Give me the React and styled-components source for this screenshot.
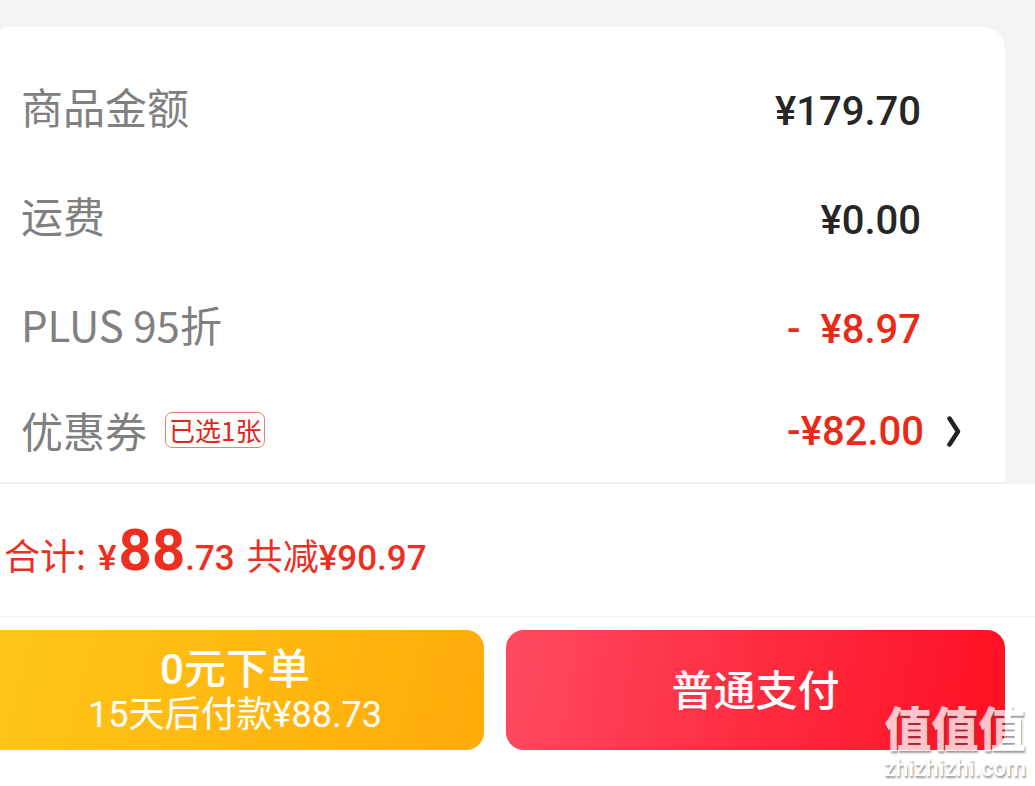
import React, { Component } from 'react';
import styled, { createGlobalStyle } from 'styled-components';

const GlobalStyle = createGlobalStyle`
  * {
    box-sizing: border-box;
  }

  body {
    margin: 0;
    background-color: white;
    font-family: 'Noto Sans CJK SC', 'Noto Sans', sans-serif;
  }

  button {
    border: none;
    padding: 0;
    background: none;
    font-family: Roboto, 'Noto Sans CJK SC', sans-serif;
    cursor: pointer;
  }
`;

const Page = styled.main`
  display: flex;
  flex-direction: column;
  min-height: 100vh;
`;

const Summary = styled.section`
  padding: 27px 30px 0 0;
  background-color: #f4f4f4;
`;

const Card = styled.dl`
  margin: 0;
  padding: 27px 84px 0 21px;
  background-color: white;
  border-radius: 6px 22px 0 0;
`;

const Row = styled.div`
  display: flex;
  align-items: center;
  justify-content: space-between;
  height: ${props => (props.$last ? 101 : 109)}px;
`;

const Label = styled.dt`
  display: flex;
  align-items: center;
  gap: 18px;
  padding-bottom: ${props => (props.$raised ? 6 : 3)}px;
  color: #808080;
  font-size: 42px;
  line-height: 60px;
`;

const Tag = styled.span`
  padding: 0 3px;
  border: 1px solid #e8826f;
  border-radius: 7px;
  color: #e1251b;
  font-size: 26px;
  line-height: 34px;
`;

const Amount = styled.dd`
  display: flex;
  align-items: center;
  margin: 0;
  padding-top: ${props => (props.$lowered ? 6 : 0)}px;
  color: ${props => (props.$discount ? '#e92a17' : '#262626')};
  font-family: Roboto, sans-serif;
  font-size: 40px;
  font-weight: 500;
  line-height: 48px;
  white-space: pre;
`;

const MoreButton = styled.button`
  display: flex;
  margin-right: -41px;
  padding-left: 22px;
`;

const Total = styled.section`
  display: flex;
  align-items: baseline;
  height: 135px;
  padding: 26px 4px 0;
  border-top: 2px solid #f2f2f2;
  border-bottom: 1px solid #f4f4f4;
  color: #ee2f1f;
  font-size: 36px;
  line-height: 80px;
`;

const Price = styled.span`
  margin: ${props => (props.$spaced ? '0 12px' : '0')};
  font-family: Roboto, sans-serif;
  font-size: 35px;
  font-weight: 500;
`;

const Big = styled.strong`
  margin-left: 2px;
  font-size: 58px;
  font-weight: 700;
`;

const Actions = styled.footer`
  position: relative;
  display: flex;
  flex-grow: 1;
  align-items: flex-start;
  gap: 22px;
  padding: 13px 30px 36px 0;
`;

const PayButton = styled.button`
  display: flex;
  flex-direction: column;
  align-items: center;
  justify-content: center;
  height: 120px;
  padding-top: 4px;
  color: white;
  font-size: 42px;
  font-weight: 500;
  line-height: 46px;
`;

const LaterButton = styled(PayButton)`
  flex: 470 1 0;
  padding-right: 14px;
  border-radius: 0 18px 18px 0;
  background: linear-gradient(105deg, #ffc619, #ffab08);
`;

const NowButton = styled(PayButton)`
  flex: 499 1 0;
  border-radius: 18px;
  background: linear-gradient(100deg, #ff4a60, #ff0f22);
`;

const Hint = styled.span`
  font-size: 36px;
  font-weight: 400;
  line-height: 44px;
`;

const Watermark = styled.div`
  position: absolute;
  right: 9px;
  bottom: 3px;
  display: flex;
  flex-direction: column;
  align-items: center;
  color: white;
  font-family: Roboto, 'Noto Sans CJK SC', sans-serif;
  font-size: 47px;
  font-weight: 900;
  line-height: 50px;
  text-shadow: 1px 2px 2px rgba(60, 60, 60, 0.7);
  opacity: 0.75;
  pointer-events: none;
`;

const Domain = styled.span`
  font-size: 23px;
  font-weight: 500;
  line-height: 28px;
`;

const rows = [
  { label: '商品金额', amount: '¥179.70' },
  { label: '运费', amount: '¥0.00' },
  { label: 'PLUS 95折', amount: '-  ¥8.97', discount: true },
  { label: '优惠券', tag: '已选1张', amount: '-¥82.00', discount: true, more: true }
];

class App extends Component {
  renderRow = row => (
    <Row key={row.label} $last={row.more}>
      <Label $raised={!row.more}>
        {row.label}
        {row.tag && <Tag>{row.tag}</Tag>}
      </Label>
      <Amount $discount={row.discount} $lowered={!row.more}>
        {row.amount}
        {row.more && (
          <MoreButton type="button" aria-label="选择优惠券">
            <svg width="16" height="32" viewBox="0 0 16 32" fill="none">
              <path
                d="M3.5 2.5 L12 15.5 L3.5 28.5"
                stroke="#222"
                strokeWidth="4.5"
                strokeLinecap="round"
                strokeLinejoin="round"
              />
            </svg>
          </MoreButton>
        )}
      </Amount>
    </Row>
  );

  render() {
    return (
      <Page>
        <GlobalStyle />
        <Summary>
          <Card>{rows.map(this.renderRow)}</Card>
        </Summary>
        <Total>
          <span>合计:</span>
          <Price $spaced>
            ¥<Big>88</Big>.73
          </Price>
          <span>共减</span>
          <Price>¥90.97</Price>
        </Total>
        <Actions>
          <LaterButton type="button">
            0元下单
            <Hint>15天后付款¥88.73</Hint>
          </LaterButton>
          <NowButton type="button">普通支付</NowButton>
          <Watermark>
            值值值
            <Domain>zhizhizhi.com</Domain>
          </Watermark>
        </Actions>
      </Page>
    );
  }
}

export default App;
